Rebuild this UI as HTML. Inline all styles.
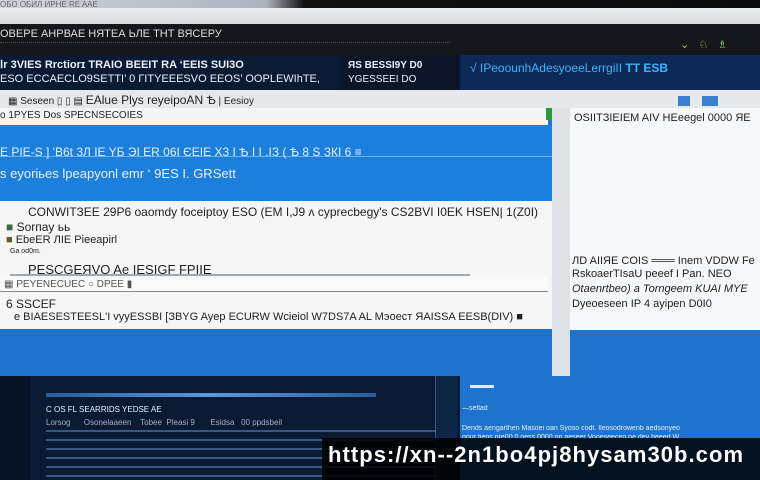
<!DOCTYPE html>
<html><head><meta charset="utf-8"><style>
*{margin:0;padding:0;box-sizing:border-box}
body{width:760px;height:480px;overflow:hidden;position:relative;background:#1e74cc;font-family:"Liberation Sans",sans-serif}
.a{position:absolute;white-space:nowrap;overflow:hidden}
.t{font-size:11px;color:#222}
.w{color:#e8f0ff}
.c{color:#39b4ff}
</style></head><body>
<div class="a" style="left:0;top:0;width:760px;height:10px;background:linear-gradient(90deg,#cfd3da 0,#aeb4be 35%,#111 40%,#0a0a0c 100%)"></div>
<div class="a t" style="left:0;top:0;font-size:8px;color:#666">ОБО ОБИЛ ИРНЕ RE AAE</div>
<div class="a" style="left:0;top:8px;width:760px;height:20px;background:linear-gradient(180deg,#e9ebee,#d7dade)"></div>
<div class="a" style="left:0;top:24px;width:760px;height:34px;background:#15171c"></div>
<div class="a w" style="left:0;top:28px;font-size:11px;color:#ddd">ОВЕРЕ  АНРВАЕ НЯТЕА ЬЛЕ ТНТ ВЯСЕРУ</div>
<div class="a" style="left:0;top:42px;width:450px;height:2px;border-top:1px dotted #556"></div>
<div class="a" style="left:680px;top:38px;font-size:11px;color:#9c6">&#8964; &nbsp; ♘ &nbsp; ♗</div>
<div class="a" style="left:0;top:55px;width:340px;height:36px;background:#0b1a33"></div>
<div class="a" style="left:340px;top:55px;width:120px;height:36px;background:#0d1628"></div>
<div class="a" style="left:460px;top:55px;width:300px;height:36px;background:#0c2a55"></div>
<div class="a w" style="left:0;top:58px;font-size:11px;font-weight:bold">Ⅰr 3VIES Rrctiorɪ TRAIO BEEIT RA ‘EEIS SUI3O</div>
<div class="a w" style="left:0;top:73px;font-size:11px">ESO ECCAECLO9SETTI’ 0 ГITYEEESVO EEOS’ OOPLEWIhTE,</div>
<div class="a w" style="left:348px;top:60px;font-size:10px;font-weight:bold">ЯS BESSI9Y D0</div>
<div class="a w" style="left:348px;top:74px;font-size:10px">YGESSEEI DO</div>
<div class="a c" style="left:470px;top:61px;font-size:12px">√ ІPeoounhAdesyoeeLerrgiІI  <b>ТТ ESВ</b></div>
<div class="a" style="left:0;top:90px;width:760px;height:20px;background:#e6e8ec"></div>
<div class="a t" style="left:8px;top:93px;font-size:10px">▦ Seseen  ▯ ▯ ▤ <span style="font-size:12px">ЕAlue Plys reyeipoAN Ѣ</span> | Eesioy</div>
<div class="a" style="left:678px;top:96px;width:40px;height:10px;background:linear-gradient(90deg,#3a7fd0 0 30%,transparent 30% 60%,#3a7fd0 60%)"></div>
<div class="a" style="left:0;top:108px;width:548px;height:18px;background:#f4f5f7;border-bottom:1px solid #ccc"></div>
<div class="a t" style="left:0;top:110px;font-size:10px">o 1PYES Dos SPECNSECOIES</div>
<div class="a" style="left:546px;top:108px;width:12px;height:12px;background:#2a9a3a"></div>
<div class="a" style="left:570px;top:108px;width:190px;height:222px;background:#f7f8fa"></div>
<div class="a t" style="left:574px;top:112px;font-size:11px">OSIITЗIEIEM AIV HEeegel 0000 ЯE</div>
<div class="a" style="left:0;top:125px;width:552px;height:76px;background:#1b7fdb"></div>
<div class="a" style="left:0;top:156px;width:552px;height:1px;background:#6fb0ee"></div>
<div class="a w" style="left:0;top:145px;font-size:12px">E PIE-S ] 'B6t 3Л IE YБ ЭІ ЕR 06І ЄEIE X3 I Ѣ І І .ІЗ ( Ѣ 8 S ЗКІ 6 ≡</div>
<div class="a w" style="left:0;top:166px;font-size:13px">s eyoriьes lpeapyonl emr ‘ 9ES I. GRSett</div>
<div class="a" style="left:552px;top:108px;width:18px;height:268px;background:#dfe1e6"></div>
<div class="a" style="left:0;top:201px;width:552px;height:128px;background:#f6f6f6"></div>
<div class="a t" style="left:28px;top:205px;font-size:12px">CONWIТЗEЕ 29P6 oaomdy foceiptoy ESO (EM I,J9 ᴧ cyprecbegy's CS2BVI I0EK HSEN| 1(Z0I)</div>
<div class="a t" style="left:6px;top:220px;font-size:12px"><span style="color:#3a6a3a">■</span> Sorпay ьь</div>
<div class="a t" style="left:6px;top:234px;font-size:11px"><span style="color:#6a5a20">■</span> EbeER ЛIE Pieeapirl</div>
<div class="a t" style="left:10px;top:248px;font-size:7px">Ga od0m.</div>
<div class="a t" style="left:28px;top:262px;font-size:13px">РЕSCGEЯVO Ae IESIGF FPIIE</div>
<div class="a" style="left:10px;top:274px;width:460px;height:2px;background:#9ab"></div>
<div class="a" style="left:0;top:277px;width:548px;height:15px;background:#fafafa;border-bottom:1px solid #888"></div>
<div class="a t" style="left:4px;top:279px;font-size:10px;color:#555">▦ PEYENECUEC ○ DPEE ▮</div>
<div class="a t" style="left:6px;top:297px;font-size:12px">6 SSCEF</div>
<div class="a t" style="left:14px;top:311px;font-size:11px">e BIAESESTEESL'I vyyESSBI [ЗBYG Ayep ECURW Wciеiol W7DS7A AL Mэоест ЯAISSA ЕЕSВ(DIV) ■</div>
<div class="a t" style="left:572px;top:255px;font-size:11px">ЛD AIIЯE COIS ═══ Inem VDDW Fe</div>
<div class="a t" style="left:572px;top:268px;font-size:11px">RskoaerTIsaU  peeef I Pan. NEO</div>
<div class="a t" style="left:572px;top:283px;font-size:11px;font-style:italic">Otaenrtbeo) a Torngeem KUAI MYE</div>
<div class="a t" style="left:572px;top:298px;font-size:11px">Dyeoeseen IP 4 ayipen D0I0</div>
<div class="a" style="left:0;top:376px;width:460px;height:104px;background:#0a1a33"></div>
<div class="a" style="left:0;top:376px;width:30px;height:104px;background:#061226"></div>
<div class="a" style="left:435px;top:376px;width:22px;height:104px;background:#0f2545;border-left:1px solid #3a5a8a"></div>
<div class="a" style="left:46px;top:393px;width:330px;height:4px;background:linear-gradient(90deg,#2a5a9a,#5a9ade,#2a5a9a)"></div>
<div class="a w" style="left:46px;top:405px;font-size:8px">C OS FL SEARRIDS YEDSE AE</div>
<div class="a w" style="left:46px;top:418px;font-size:8px;color:#aac">Lorsog &nbsp;&nbsp;&nbsp;&nbsp; Osonelaaeen &nbsp;&nbsp; Tobee &nbsp;Pleasi 9 &nbsp;&nbsp;&nbsp;&nbsp;&nbsp; Esidsa &nbsp; 00 ppdsbeil</div>
<div class="a" style="left:46px;top:430px;width:390px;height:50px;background:repeating-linear-gradient(180deg,#5a80b0 0 2px,transparent 2px 9px);opacity:.6"></div>
<div class="a" style="left:470px;top:385px;width:24px;height:3px;background:#e0eaff"></div>
<div class="a w" style="left:462px;top:405px;font-size:7px">—seflad</div>
<div class="a w" style="left:462px;top:425px;font-size:7px">Dends aengarthen Masoei oan Syoso codt. Ileosodrowenb aedsonyeo</div>
<div class="a w" style="left:462px;top:434px;font-size:7px">gour tiens pre00 0.oess 0000 on aeseer Vooeseeceo oe dey beeed W</div>
<div class="a" style="left:322px;top:438px;width:438px;height:42px;background:rgba(0,0,0,.85)"></div>
<div class="a" style="left:328px;top:442px;font-size:22px;font-weight:bold;color:#fff;letter-spacing:1.05px">https://xn--2n1bo4pj8hysam30b.com</div>
</body></html>
